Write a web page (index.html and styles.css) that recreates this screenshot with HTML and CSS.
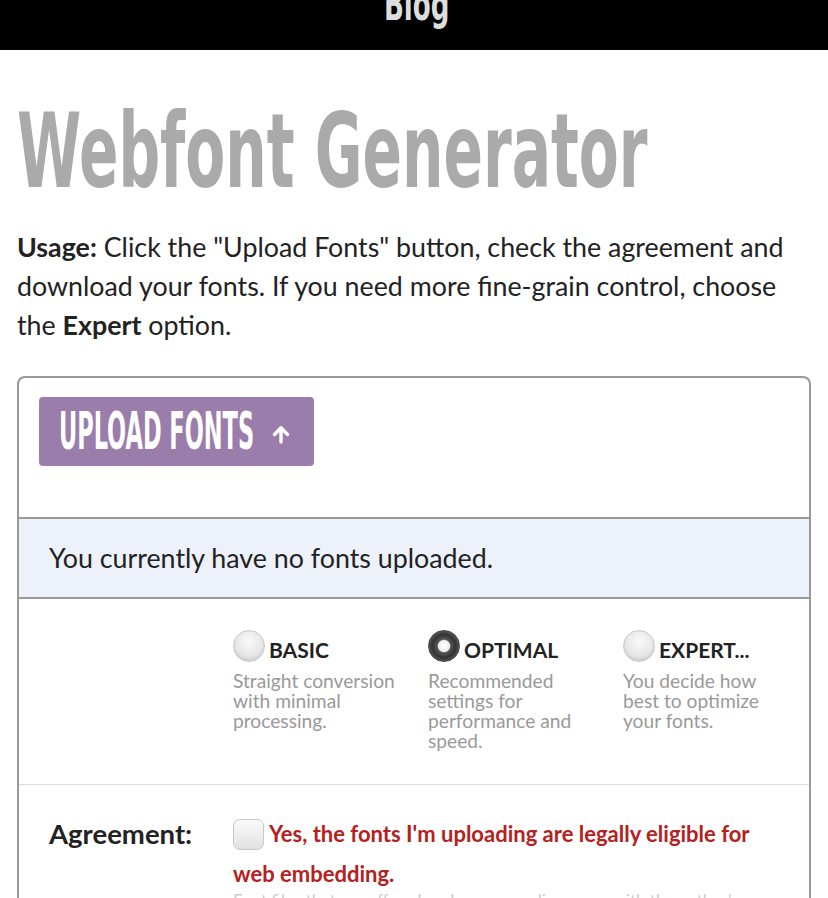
FILE: index.html
```html
<!DOCTYPE html>
<html lang="en">
<head>
<meta charset="utf-8">
<title>Webfont Generator</title>
<link rel="stylesheet" href="styles.css">
</head>
<body>
<header class="topbar">
  <a class="nav-link" href="#">Blog</a>
</header>
<main class="page">
  <h1 class="title"><span class="title-text">Webfont Generator</span></h1>
  <p class="usage"><strong>Usage:</strong> Click the "Upload Fonts" button, check the agreement and download your fonts. If you need more fine-grain control, choose the <strong>Expert</strong> option.</p>

  <section class="panel">
    <div class="upload-area">
      <button class="upload-btn" type="button"><span class="upload-label">UPLOAD FONTS</span><svg class="arrow" width="20" height="20" viewBox="0 0 20 20"><path d="M10 18 V4 M3.5 10.5 L10 3.8 L16.5 10.5" fill="none" stroke="#fff" stroke-width="3.4" stroke-linecap="round" stroke-linejoin="round"/></svg></button>
    </div>
    <div class="status">You currently have no fonts uploaded.</div>
    <div class="modes">
      <div class="mode">
        <div class="mode-head"><span class="radio"></span><span class="mode-name">BASIC</span></div>
        <p class="mode-desc">Straight conversion with minimal processing.</p>
      </div>
      <div class="mode">
        <div class="mode-head"><span class="radio radio-on"></span><span class="mode-name">OPTIMAL</span></div>
        <p class="mode-desc">Recommended settings for performance and speed.</p>
      </div>
      <div class="mode">
        <div class="mode-head"><span class="radio"></span><span class="mode-name">EXPERT...</span></div>
        <p class="mode-desc">You decide how best to optimize your fonts.</p>
      </div>
    </div>
    <div class="agreement">
      <div class="agree-label">Agreement:</div>
      <div class="agree-body">
        <p class="agree-text"><span class="checkbox"></span>Yes, the fonts I'm uploading are legally eligible for web embedding.</p>
        <p class="agree-note">Font files that are offered under an open license or with the author's permission only.</p>
      </div>
    </div>
  </section>
</main>
</body>
</html>
```

FILE: styles.css
```css
* { box-sizing: border-box; }
html, body { margin: 0; padding: 0; background: #fff; }
body {
  font-family: Lato, "Open Sans", "Noto Sans", sans-serif;
  color: #222;
  overflow: hidden;
}
.topbar {
  height: 50px;
  background: #000;
  overflow: hidden;
  text-align: center;
}
.nav-link {
  display: inline-block;
  margin-top: -17px;
  margin-left: 6px;
  font-family: "DejaVu Sans Condensed", "Liberation Sans Narrow", sans-serif;
  font-weight: 700;
  font-size: 44px;
  line-height: 44px;
  color: #ddd;
  text-decoration: none;
  transform: scaleX(0.66);
}
.page { padding: 0 17px; }
.title {
  margin: 0;
  padding-top: 46px;
  height: 178px;
  font-family: "DejaVu Sans Condensed", "Liberation Sans Narrow", sans-serif;
  font-weight: 700;
  font-size: 104px;
  line-height: 110px;
  color: #aaa;
  white-space: nowrap;
}
.title-text {
  display: inline-block;
  transform: scaleX(0.622);
  transform-origin: left center;
}
.usage {
  margin: 0;
  font-size: 26.8px;
  line-height: 39px;
  color: #222;
}
.usage strong { font-weight: 700; }
.panel {
  margin-top: 31px;
  border: 2px solid #999;
  border-radius: 8px 8px 0 0;
  border-bottom: none;
}
.upload-area {
  padding: 19px 20px 51px;
  border-bottom: 2px solid #999;
}
.upload-btn {
  display: flex;
  align-items: center;
  width: 275px;
  height: 69px;
  border: none;
  border-radius: 4px;
  background: #9a7dab;
  padding: 0 0 0 20px;
  cursor: pointer;
}
.upload-label {
  display: inline-block;
  width: 195px;
  font-family: "DejaVu Sans Condensed", "Liberation Sans Narrow", sans-serif;
  font-weight: 700;
  font-size: 52px;
  line-height: 69px;
  color: #fff;
  white-space: nowrap;
  transform: scaleX(0.48);
  transform-origin: left center;
}
.arrow {
  display: block;
  margin-left: 17px;
  margin-top: 4px;
}
.status {
  background: #edf1fa;
  height: 80px;
  padding-left: 30px;
  font-size: 26.8px;
  line-height: 78px;
  color: #222;
  border-bottom: 2px solid #999;
}
.modes {
  display: flex;
  padding: 31px 0 33px 214px;
  border-bottom: 1px solid #ddd;
}
.mode { width: 195px; flex: none; }
.mode-head {
  display: flex;
  align-items: center;
  gap: 4px;
  height: 32px;
}
.radio {
  width: 32px;
  height: 32px;
  border-radius: 50%;
  flex: none;
  border: 1px solid #c8c8c8;
  background: radial-gradient(circle at 50% 35%, #fafafa 0%, #e6e6e6 60%, #d4d4d4 100%);
  box-shadow: inset 0 -2px 3px rgba(0,0,0,0.08);
}
.radio-on {
  border: 1px solid #444;
  background: radial-gradient(circle at 50% 50%, #fff 0%, #eee 26%, #555 32%, #333 55%, #777 85%, #999 100%);
}
.mode-name {
  font-size: 21px;
  font-weight: 700;
  color: #222;
  padding-top: 6px;
}
.mode-desc {
  margin: 9px 0 0;
  font-size: 19.2px;
  line-height: 20px;
  color: #999;
  padding-right: 22px;
}
.agreement {
  display: flex;
  padding: 29px 0 0 30px;
  height: 120px;
}
.agree-label {
  width: 184px;
  flex: none;
  font-size: 27.5px;
  font-weight: 700;
  line-height: 40px;
  color: #222;
}
.agree-body { flex: 1; }
.agree-text {
  margin: 0;
  font-size: 22px;
  font-weight: 700;
  line-height: 40px;
  color: #b52020;
  padding-right: 20px;
}
.checkbox {
  display: inline-block;
  width: 31px;
  height: 31px;
  margin-right: 5px;
  vertical-align: -8px;
  border: 1px solid #c8c8c8;
  border-radius: 7px;
  background: linear-gradient(#fafafa, #e2e2e2);
}
.agree-note {
  margin: -4px 0 0;
  font-size: 17px;
  line-height: 22px;
  color: #ccc;
}
```
